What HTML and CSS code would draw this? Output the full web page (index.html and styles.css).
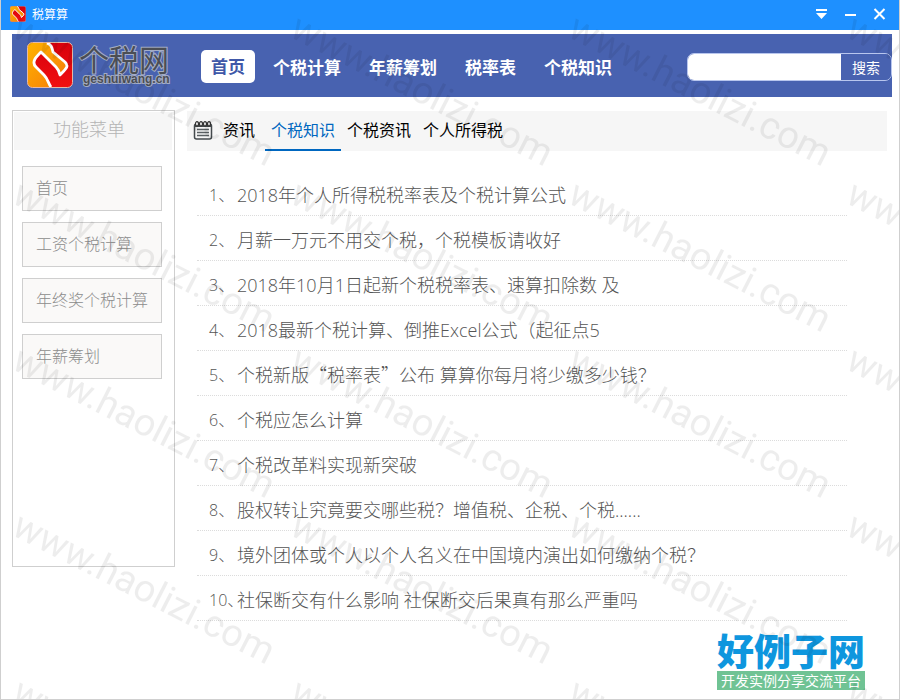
FILE: index.html
```html
<!DOCTYPE html>
<html lang="zh-CN">
<head>
<meta charset="utf-8">
<title>税算算</title>
<link rel="stylesheet" href="styles.css">
</head>
<body>
<svg class="defs" aria-hidden="true">
  <defs>
    <linearGradient id="gold" x1="0" y1="0" x2="1" y2="1"><stop offset="0" stop-color="#ffb400"/><stop offset="1" stop-color="#f57a0a"/></linearGradient>
    <linearGradient id="red" x1="0" y1="0" x2="0" y2="1"><stop offset="0" stop-color="#d8000c"/><stop offset="1" stop-color="#f01010"/></linearGradient>
    <symbol id="mark" viewBox="0 0 46 46">
      <rect x="0.5" y="0.5" width="45" height="45" rx="5" fill="url(#red)"/>
      <path d="M5.500 .5H20C25 3 25 6 26 10L38 20C42 24 40 26 33 33C32 29 31 27 29 25L14 10C9 15 4 20 9 25L17 33C21 37 21 41 24 45.500H5.500a5 5 0 0 1-5-5v-35a5 5 0 0 1 5-5z" fill="url(#gold)"/>
      <path d="M20 1C25 3 25 6 26 10L38 20C42 24 40 26 33 33C32 29 31 27 29 25L14 10C9 15 4 20 9 25L17 33C21 37 21 41 24 45" fill="none" stroke="#fff" stroke-width="2.800" stroke-linejoin="round"/>
      <rect x="0.5" y="0.5" width="45" height="45" rx="5" fill="none" stroke="#e3b9a8"/>
    </symbol>
  </defs>
</svg>
<div class="window">
  <header class="titlebar">
    <svg class="app-icon" aria-hidden="true"><use href="#mark"/></svg>
    <span class="app-name">税算算</span>
    <div class="controls">
      <button type="button" aria-label="菜单"><svg width="13" height="12" viewBox="0 0 13 12"><path d="M1 1h11v2H1zM1 5h11L6.500 11z" fill="#fff"/></svg></button>
      <button type="button" aria-label="最小化"><svg width="13" height="12" viewBox="0 0 13 12"><path d="M1 6h11v2H1z" fill="#fff"/></svg></button>
      <button type="button" aria-label="关闭"><svg width="13" height="12" viewBox="0 0 13 12"><path d="M1.500 1l10 10M11.500 1l-10 10" stroke="#fff" stroke-width="2"/></svg></button>
    </div>
  </header>

  <div class="banner">
    <a class="brand" href="#">
      <svg class="brand-mark" aria-hidden="true"><use href="#mark"/></svg>
      <span class="brand-text"><span class="brand-name">个税网</span><span class="brand-url">geshuiwang.cn</span></span>
    </a>
    <nav class="nav">
      <a class="active" href="#">首页</a>
      <a href="#">个税计算</a>
      <a href="#">年薪筹划</a>
      <a href="#">税率表</a>
      <a href="#">个税知识</a>
    </nav>
    <form class="search">
      <input type="text" aria-label="搜索内容">
      <button type="button">搜索</button>
    </form>
  </div>

  <div class="body">
    <aside class="sidebar">
      <h2>功能菜单</h2>
      <div class="menu">
        <button type="button">首页</button>
        <button type="button">工资个税计算</button>
        <button type="button">年终奖个税计算</button>
        <button type="button">年薪筹划</button>
      </div>
    </aside>
    <main class="main">
      <div class="toolbar">
        <svg class="cal" viewBox="0 0 20 20" aria-hidden="true">
          <rect x="1.500" y="3" width="17" height="15" rx="2" fill="#f6f6f6" stroke="#444a4d" stroke-width="1.500"/>
          <path d="M2 4h16v2H2z" fill="#444a4d"/>
          <path d="M4 8.500h12M4 11.500h12M4 14.500h12" stroke="#5a6063" stroke-width="1.500"/>
          <g fill="#f6f6f6" stroke="#333" stroke-width="1.200"><ellipse cx="4" cy="2.800" rx="1.500" ry="2.200"/><ellipse cx="8" cy="2.800" rx="1.500" ry="2.200"/><ellipse cx="12" cy="2.800" rx="1.500" ry="2.200"/><ellipse cx="16" cy="2.800" rx="1.500" ry="2.200"/></g>
        </svg>
        <span class="label">资讯</span>
        <nav class="tabs">
          <a class="current" href="#">个税知识</a>
          <a href="#">个税资讯</a>
          <a href="#">个人所得税</a>
        </nav>
      </div>
      <ul class="list">
        <li><span class="num">1、</span><a href="#">2018年个人所得税税率表及个税计算公式</a></li>
        <li><span class="num">2、</span><a href="#">月薪一万元不用交个税，个税模板请收好</a></li>
        <li><span class="num">3、</span><a href="#">2018年10月1日起新个税税率表、速算扣除数 及</a></li>
        <li><span class="num">4、</span><a href="#">2018最新个税计算、倒推Excel公式（起征点5</a></li>
        <li><span class="num">5、</span><a href="#">个税新版<span class="cjk">“</span>税率表<span class="cjk">”</span>公布 算算你每月将少缴多少钱？</a></li>
        <li><span class="num">6、</span><a href="#">个税应怎么计算</a></li>
        <li><span class="num">7、</span><a href="#">个税改革料实现新突破</a></li>
        <li><span class="num">8、</span><a href="#">股权转让究竟要交哪些税？增值税、企税、个税......</a></li>
        <li><span class="num">9、</span><a href="#">境外团体或个人以个人名义在中国境内演出如何缴纳个税？</a></li>
        <li><span class="num">10、</span><a href="#">社保断交有什么影响 社保断交后果真有那么严重吗</a></li>
      </ul>
    </main>
  </div>

  <div class="stamp"><span class="stamp-name">好例子网</span><span class="stamp-sub">开发实例分享交流平台</span></div>
  <svg class="watermark" aria-hidden="true">
    <defs>
      <pattern id="wm" x="7" y="9" width="278" height="166" patternUnits="userSpaceOnUse">
        <text x="2" y="27" transform="rotate(27 2 27)">www.haolizi.com</text>
      </pattern>
    </defs>
    <rect width="100%" height="100%" fill="url(#wm)"/>
  </svg>
</div>
</body>
</html>
```
FILE: styles.css
```css
* { box-sizing: border-box; }

body {
  margin: 0;
  background: #fff;
  font-family: "Open Sans", "Noto Sans CJK SC", sans-serif;
  font-size: 16px;
}

a { color: inherit; text-decoration: none; }
button, input { font: inherit; margin: 0; padding: 0; border: 0; }
.defs { position: absolute; width: 0; height: 0; }

.window {
  position: relative;
  min-height: 100vh;
  border: 1px solid #cfcfcf;
  border-top: 0;
  overflow: hidden;
}

.titlebar {
  display: flex;
  align-items: center;
  gap: 6px;
  height: 30px;
  margin: 0 -1px;
  padding: 0 14px 2px 10px;
  background: #1e90ff;
  color: #fff;
  font-size: 12px;
}
.app-icon { width: 16px; height: 16px; }
.controls { display: flex; gap: 16px; margin-left: auto; }
.controls button { display: flex; background: none; }

.banner {
  display: flex;
  align-items: center;
  height: 63px;
  margin: 4px 7px 0 11px;
  padding: 2px 0 0 15px;
  background: #4862b0;
  color: #fff;
}
.brand { display: flex; align-items: flex-start; gap: 6px; width: 173px; height: 50px; }
.brand-mark { width: 46px; height: 46px; }
.brand-text { display: flex; flex-direction: column; color: #4b4e55; paint-order: stroke fill; }
.brand-name {
  font: 30px/32px "Noto Sans CJK SC", sans-serif;
  -webkit-text-stroke: 2px #a4adc6;
}
.brand-url {
  padding-left: 4px;
  font: bold 12px/10px "Liberation Sans", sans-serif;
  -webkit-text-stroke: 2px #a4adc6;
}
.nav {
  display: flex;
  align-items: center;
  gap: 28px;
  padding-left: 1px;
  font-size: 17px;
  font-weight: bold;
  white-space: nowrap;
}
.nav .active {
  margin-right: -10px;
  padding: 0 10px;
  border-radius: 5px;
  background: #fff;
  color: #4058a8;
  line-height: 33px;
}
.search {
  display: flex;
  width: 205px;
  height: 28px;
  margin-left: auto;
  border: 1px solid #b8c6ee;
  border-radius: 7px;
  overflow: hidden;
}
.search input { flex: 1; min-width: 0; background: #fff; }
.search button { width: 50px; background: #4862b0; color: #fff; font-size: 14px; }

.body { display: flex; gap: 12px; margin: 13px 12px 0 11px; }

.sidebar {
  width: 163px;
  height: 457px;
  padding: 1px;
  border: 1px solid #cfcfcf;
}
.sidebar h2 {
  margin: 0 1px 16px 0;
  padding: 0 8px 4px 0;
  background: #f6f6f6;
  color: #b4b4b4;
  font-size: 18px;
  font-weight: 300;
  line-height: 34px;
  text-align: center;
}
.menu { display: flex; flex-direction: column; gap: 11px; padding: 0 11px 0 8px; }
.menu button {
  height: 45px;
  padding: 0 0 4px 13px;
  border: 1px solid #cfcfcf;
  background: #faf9f8;
  color: #8c8c8c;
  font-weight: 300;
  text-align: left;
  white-space: nowrap;
}

.main { flex: 1; padding-top: 1px; }
.toolbar {
  display: flex;
  align-items: center;
  height: 40px;
  padding-left: 6px;
  background: #f6f6f6;
}
.cal { width: 20px; height: 20px; }
.label { margin: 0 10px; line-height: 38px; padding-bottom: 2px; }
.tabs { display: flex; }
.tabs a { padding: 0 6px; line-height: 38px; border-bottom: 2px solid transparent; }
.tabs .current { color: #0067c0; border-color: #0067c0; }

.list {
  margin: 20px 40px 0 10px;
  padding: 0;
  list-style: none;
  color: #555;
  font-size: 18px;
  font-weight: 300;
}
.list li {
  display: flex;
  align-items: center;
  height: 45px;
  padding: 2px 0 0 12px;
  border-bottom: 1px dotted #dcdcdc;
  white-space: nowrap;
}
.num { width: 28px; font-size: 16px; }
.cjk { font-family: "Noto Sans CJK SC", sans-serif; }

.stamp {
  position: absolute;
  right: 34px;
  bottom: 9px;
  display: flex;
  flex-direction: column;
  width: 148px;
}
.stamp-name {
  color: #0e96de;
  font: 900 37px/41px "Noto Sans CJK SC", sans-serif;
}
.stamp-sub {
  background: #70c394;
  color: #fff;
  font-size: 14px;
  line-height: 19px;
  text-align: center;
  white-space: nowrap;
}

.watermark {
  position: absolute;
  inset: 0;
  width: 100%;
  height: 100%;
  pointer-events: none;
}
.watermark text { font: 38px Roboto, sans-serif; fill: #000; fill-opacity: 0.07; }
```
